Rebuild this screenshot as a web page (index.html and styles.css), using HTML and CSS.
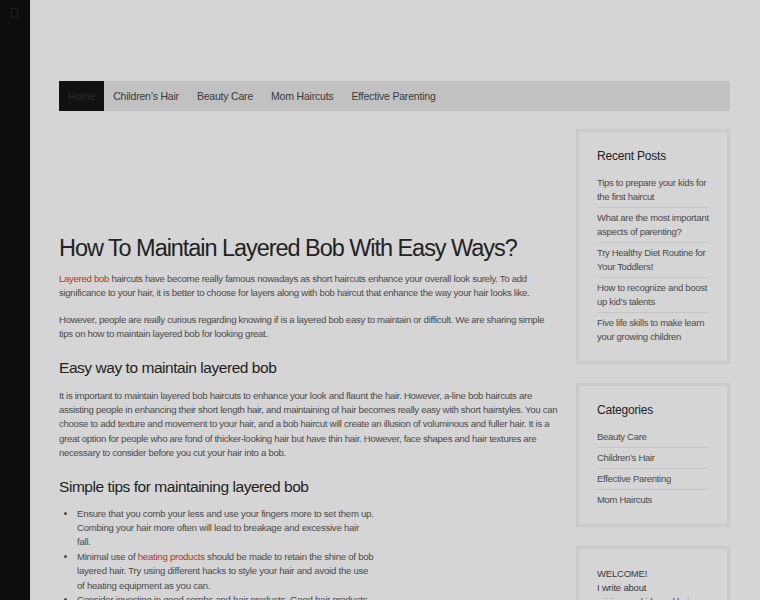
FILE: index.html
```html
<!DOCTYPE html>
<html>
<head>
<meta charset="utf-8">
<link rel="stylesheet" href="styles.css">
</head>
<body>
<div class="shell">
  <aside class="strip">
    <span class="strip-icon"></span>
  </aside>
  <div class="page">
    <header class="masthead"></header>
    <nav class="menu">
      <a class="menu-item active">Home</a>
      <a class="menu-item">Children’s Hair</a>
      <a class="menu-item">Beauty Care</a>
      <a class="menu-item">Mom Haircuts</a>
      <a class="menu-item">Effective Parenting</a>
    </nav>
    <div class="layout">
      <main class="content">
        <div class="ad-space"></div>
        <h1 class="title">How To Maintain Layered Bob With Easy Ways?</h1>
        <p class="para"><a class="link">Layered bob</a> haircuts have become really famous nowadays as short haircuts enhance your overall look surely. To add significance to your hair, it is better to choose for layers along with bob haircut that enhance the way your hair looks like.</p>
        <p class="para">However, people are really curious regarding knowing if is a layered bob easy to maintain or difficult. We are sharing simple tips on how to maintain layered bob for looking great.</p>
        <h2 class="subtitle">Easy way to maintain layered bob</h2>
        <p class="para">It is important to maintain layered bob haircuts to enhance your look and flaunt the hair. However, a-line bob haircuts are assisting people in enhancing their short length hair, and maintaining of hair becomes really easy with short hairstyles. You can choose to add texture and movement to your hair, and a bob haircut will create an illusion of voluminous and fuller hair. It is a great option for people who are fond of thicker-looking hair but have thin hair. However, face shapes and hair textures are necessary to consider before you cut your hair into a bob.</p>
        <h2 class="subtitle second">Simple tips for maintaining layered bob</h2>
        <ul class="tips">
          <li>Ensure that you comb your less and use your fingers more to set them up. Combing your hair more often will lead to breakage and excessive hair fall.</li>
          <li>Minimal use of <a class="link">heating products</a> should be made to retain the shine of bob layered hair. Try using different hacks to style your hair and avoid the use of heating equipment as you can.</li>
          <li>Consider investing in good combs and hair products. Good hair products help in keeping your layered bob healthy and shiny.</li>
        </ul>
      </main>
      <aside class="sidebar">
        <section class="widget">
          <h3 class="widget-title">Recent Posts</h3>
          <ul class="widget-list">
            <li>Tips to prepare your kids for the first haircut</li>
            <li>What are the most important aspects of parenting?</li>
            <li>Try Healthy Diet Routine for Your Toddlers!</li>
            <li>How to recognize and boost up kid’s talents</li>
            <li>Five life skills to make learn your growing children</li>
          </ul>
        </section>
        <section class="widget">
          <h3 class="widget-title">Categories</h3>
          <ul class="widget-list">
            <li>Beauty Care</li>
            <li>Children’s Hair</li>
            <li>Effective Parenting</li>
            <li>Mom Haircuts</li>
          </ul>
        </section>
        <section class="widget welcome">
          <p class="welcome-text">WELCOME!<br>I write about<br>raising my kids and hair care.</p>
        </section>
      </aside>
    </div>
  </div>
</div>
</body>
</html>
```
FILE: styles.css
```css
* { box-sizing: border-box; }
html, body {
  margin: 0;
  padding: 0;
  background: #d5d5d5;
  height: 600px;
  overflow: hidden;
}
body {
  font-family: "Liberation Sans", Arial, sans-serif;
  color: #4a4a4a;
}
.shell {
  display: flex;
  height: 600px;
}
.strip {
  width: 30px;
  flex: none;
  background: #0d0d0d;
  padding: 8px 0 0 11px;
}
.strip-icon {
  display: block;
  width: 7px;
  height: 10px;
  border: 1px solid #1f1f1f;
}
.page {
  flex: 1;
  padding: 0 30px 0 29px;
}
.masthead {
  height: 81px;
}
.menu {
  display: flex;
  height: 30px;
  background: #c1c1c1;
  border-radius: 0 2px 2px 0;
}
.menu-item {
  display: flex;
  align-items: center;
  padding: 0 9px;
  font-size: 10.5px;
  letter-spacing: -0.2px;
  color: #3a3a3a;
}
.menu-item.active {
  background: #111111;
  color: #2b2b2b;
}
.layout {
  display: flex;
  gap: 18px;
  margin-top: 18px;
}
.content {
  flex: 1;
  min-width: 0;
}
.ad-space {
  height: 104px;
}
.title {
  margin: 0 0 9px;
  font-size: 23.5px;
  letter-spacing: -1.05px;
  font-weight: normal;
  color: #222;
  line-height: 30px;
}
.para {
  margin: 0 0 12px;
  font-size: 9.6px;
  letter-spacing: -0.3px;
  line-height: 14.4px;
  color: #4a4a4a;
}
.link {
  color: #b3321f;
}
.subtitle {
  margin: 16px 0 11px;
  font-size: 15.5px;
  letter-spacing: -0.45px;
  font-weight: normal;
  color: #222;
  line-height: 20px;
}
.subtitle.second {
  margin-top: 16px;
  margin-bottom: 10px;
}
.tips {
  margin: 0;
  padding-left: 18px;
  width: 315.5px;
  font-size: 9.6px;
  letter-spacing: -0.25px;
  line-height: 14.4px;
  color: #4a4a4a;
}
.sidebar {
  width: 154px;
  flex: none;
  display: flex;
  flex-direction: column;
  gap: 19px;
}
.widget {
  border: 3px solid #cacaca;
  padding: 17px 18px 17px;
}
.widget-title {
  margin: 0 0 13px;
  font-size: 12px;
  letter-spacing: -0.2px;
  line-height: 14px;
  font-weight: normal;
  color: #222;
}
.widget-list {
  list-style: none;
  margin: 0;
  padding: 0;
  font-size: 9.5px;
  letter-spacing: -0.3px;
  line-height: 14px;
  color: #4a4a4a;
}
.widget-list li {
  padding: 0 0 3px;
  margin-bottom: 3px;
  border-bottom: 1px solid #c4c4c4;
}
.widget-list li:last-child {
  border-bottom: none;
  margin-bottom: 0;
  padding-bottom: 0;
}
.welcome {
  padding-top: 18px;
}
.welcome-text {
  margin: 0;
  font-size: 9.5px;
  letter-spacing: -0.2px;
  line-height: 14px;
  color: #3a3a3a;
}
```
